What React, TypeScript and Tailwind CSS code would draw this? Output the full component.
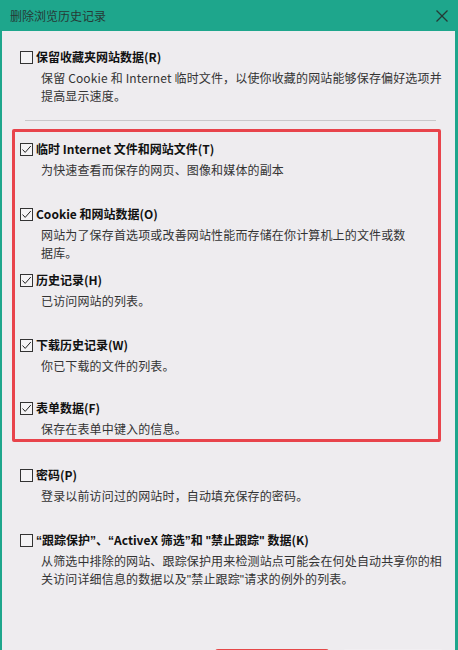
import React from "react";

const FONT = '"Noto Sans CJK SC", "Noto Sans", "Liberation Sans", sans-serif';

function Q({ c }: { c: string }) {
  return <span className="font-['Liberation_Sans',sans-serif]">{c}</span>;
}

function Box({ checked }: { checked: boolean }) {
  return (
    <span className="w-[13px] h-[13px] border border-[#333333] bg-[#f4f3f5] flex items-center justify-center shrink-0">
      {checked && (
        <svg width="11" height="11" viewBox="0 0 11 11" fill="none">
          <polyline points="1.5,5.5 4.2,8.4 9.8,2" stroke="#222" strokeWidth="1" fill="none" />
        </svg>
      )}
    </span>
  );
}

function Item({
  checked,
  label,
  lines,
  className = "",
}: {
  checked: boolean;
  label: React.ReactNode;
  lines: React.ReactNode[];
  className?: string;
}) {
  return (
    <div className={className}>
      <div className="h-[20px] flex items-center gap-[3px]">
        <Box checked={checked} />
        <span className="text-[12px] font-bold text-[#111111] whitespace-nowrap">{label}</span>
      </div>
      <div className="mt-[2px] pl-[21px] text-[12px] leading-[18px] text-[#333333] tracking-[0.15px]">
        {lines.map((l, i) => (
          <div key={i} className="whitespace-nowrap">
            {l}
          </div>
        ))}
      </div>
    </div>
  );
}

export default function App() {
  return (
    <div className="w-[458px] h-[650px] overflow-hidden flex flex-col bg-[#1ea68c]" style={{ fontFamily: FONT }}>
      <div className="h-[31px] shrink-0 flex items-center justify-between pl-[10px] pr-[10px] bg-[#1ea68c]">
        <span className="text-[12px] text-[#263935]">删除浏览历史记录</span>
        <svg width="12" height="12" viewBox="0 0 12 12">
          <line x1="0.5" y1="0.5" x2="11.5" y2="11.5" stroke="#243a36" strokeWidth="1.3" />
          <line x1="11.5" y1="0.5" x2="0.5" y2="11.5" stroke="#243a36" strokeWidth="1.3" />
        </svg>
      </div>
      <div className="flex-1 ml-[2px] mr-[3px] bg-[#eeecef] flex flex-col">
        <div className="pt-[16px] pl-[18px]">
          <Item
            checked={false}
            label="保留收藏夹网站数据(R)"
            lines={["保留 Cookie 和 Internet 临时文件，以使你收藏的网站能够保存偏好选项并", "提高显示速度。"]}
          />
        </div>
        <div className="mt-[15px] ml-[23px] w-[411px] h-px bg-[#c9c7ca]" />
        <div className="mt-[8px] ml-[10px] w-[429px] border-[3px] border-[#e8434b] rounded-[2px] pl-[5px] pt-[7px] pb-[1px]">
          <Item checked={true} label="临时 Internet 文件和网站文件(T)" lines={["为快速查看而保存的网页、图像和媒体的副本"]} />
          <Item
            className="mt-[25px]"
            checked={true}
            label="Cookie 和网站数据(O)"
            lines={["网站为了保存首选项或改善网站性能而存储在你计算机上的文件或数", "据库。"]}
          />
          <Item className="mt-[8px]" checked={true} label="历史记录(H)" lines={["已访问网站的列表。"]} />
          <Item className="mt-[25px]" checked={true} label="下载历史记录(W)" lines={["你已下载的文件的列表。"]} />
          <Item className="mt-[23px]" checked={true} label="表单数据(F)" lines={["保存在表单中键入的信息。"]} />
        </div>
        <div className="pl-[18px]">
          <Item className="mt-[23px]" checked={false} label="密码(P)" lines={["登录以前访问过的网站时，自动填充保存的密码。"]} />
          <Item
            className="mt-[25px]"
            checked={false}
            label={
              <>
                <Q c="“" />跟踪保护<Q c="”" />、<Q c="“" />ActiveX 筛选<Q c="”" />和 <Q c={'"'} />禁止跟踪<Q c={'"'} /> 数据(K)
              </>
            }
            lines={[
              "从筛选中排除的网站、跟踪保护用来检测站点可能会在何处自动共享你的相",
              <>
                关访问详细信息的数据以及<Q c={'"'} />禁止跟踪<Q c={'"'} />请求的例外的列表。
              </>,
            ]}
          />
        </div>
        <div className="mt-[60px] flex gap-[14px] pl-[213px]">
          <div className="w-[114px] h-[26px] shrink-0 rounded-[3px] bg-[#e64848]" />
          <div className="w-[100px] h-[26px] shrink-0 rounded-[3px] bg-[#f1eff2]" />
        </div>
      </div>
    </div>
  );
}
